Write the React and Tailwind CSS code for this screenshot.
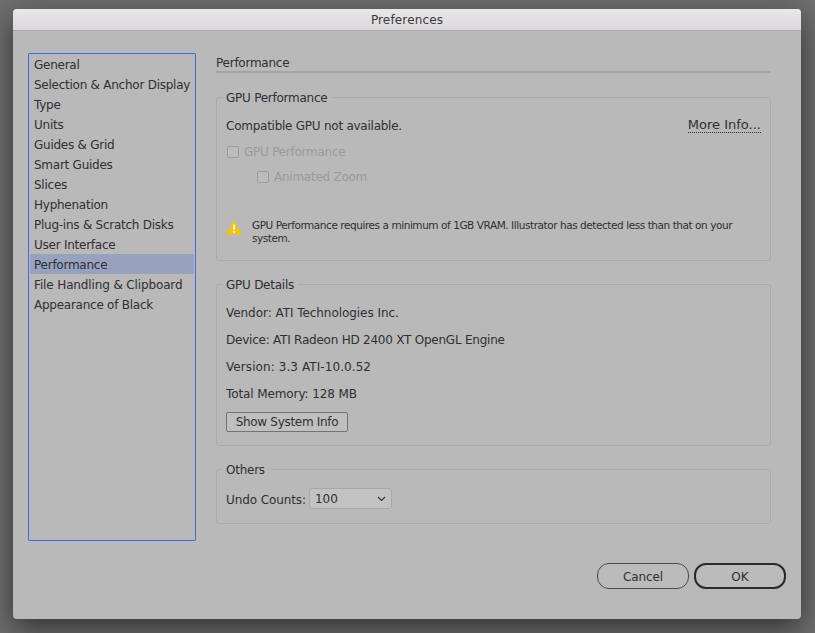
import React from "react";

const items = [
  "General",
  "Selection & Anchor Display",
  "Type",
  "Units",
  "Guides & Grid",
  "Smart Guides",
  "Slices",
  "Hyphenation",
  "Plug-ins & Scratch Disks",
  "User Interface",
  "Performance",
  "File Handling & Clipboard",
  "Appearance of Black",
];

function Group({ title, className, children }) {
  return (
    <fieldset className={"border border-[#aaaaaa] rounded-[3px] px-[9px] " + className}>
      <legend className="ml-[-4px] pl-[4px] pr-[4px] h-[16px] leading-[18px]">{title}</legend>
      {children}
    </fieldset>
  );
}

function Check({ label, className }) {
  return (
    <div className={"flex items-center h-[20px] " + className}>
      <span className="w-[12px] h-[12px] rounded-[2px] border border-[#9c9c9c] bg-[#bcbcbc] mr-[5px]" />
      <span className="text-[#9a9a9a]">{label}</span>
    </div>
  );
}

export default function App() {
  return (
    <div
      className="w-[815px] h-[633px] overflow-hidden bg-[#6e6e6e] pt-[9px] pl-[13px] text-[12px] tracking-[-0.25px] text-[#2f2f34]"
      style={{ fontFamily: '"DejaVu Sans", sans-serif' }}
    >
      <div className="w-[788px] h-[610px] bg-[#b9b9b9] rounded-[4px] shadow-[0_10px_30px_rgba(0,0,0,0.55)] flex flex-col overflow-hidden">
        <div className="h-[22px] shrink-0 bg-gradient-to-b from-[#e9e7e9] to-[#dad8da] border-b border-[#a9a9a9] flex items-center justify-center text-[#3a3a3a] tracking-[0.15px]">
          Preferences
        </div>
        <div className="flex pl-[15px] pt-[22px]">
          <div className="w-[168px] h-[488px] border border-[#3f6de0] rounded-[1px] px-[1px] shrink-0">
            {items.map((t) => (
              <div
                key={t}
                className={
                  "h-[20px] leading-[22px] pl-[4px] whitespace-nowrap " +
                  (t === "Performance" ? "bg-[#98a2bf] " : "") +
                  (t === "File Handling & Clipboard" ? "tracking-[-0.13px]" : "")
                }
              >
                {t}
              </div>
            ))}
          </div>
          <div className="w-[555px] ml-[20px]">
            <div className="h-[20px] leading-[20px] border-b-2 border-[#a4a4a4]">Performance</div>
            <Group title="GPU Performance" className="mt-[16px] h-[172px]">
              <div className="flex justify-between items-start h-[20px] mt-[11px]">
                <span className="leading-[20px]">Compatible GPU not available.</span>
                <span className="text-[13px] tracking-normal border-b border-dotted border-[#2f2f34] leading-[15px] mt-[1px]">More Info...</span>
              </div>
              <Check label="GPU Performance" className="mt-[6px] pl-[1px]" />
              <Check label="Animated Zoom" className="mt-[5px] pl-[31px]" />
              <div className="flex mt-[32px]">
                <svg width="16" height="15" viewBox="0 0 16 15" className="mt-[1px] shrink-0">
                  <path d="M8 .8 15.6 14.2H.4Z" fill="#efc41a" stroke="#efc41a" strokeLinejoin="round" />
                  <rect x="7.1" y="4.5" width="1.8" height="5.5" fill="#faf6e2" />
                  <rect x="7.1" y="11" width="1.8" height="1.8" fill="#faf6e2" />
                </svg>
                <p className="ml-[10px] text-[10.5px] tracking-[-0.44px] leading-[13px] w-[490px]">
                  GPU Performance requires a minimum of 1GB VRAM. Illustrator has detected less than that on your system.
                </p>
              </div>
            </Group>
            <Group title="GPU Details" className="mt-[15px] h-[170px]">
              <div className="mt-[8px] flex flex-col">
                <div className="h-[27px] leading-[27px] tracking-[-0.05px]">Vendor: ATI Technologies Inc.</div>
                <div className="h-[27px] leading-[27px] tracking-[-0.23px]">Device: ATI Radeon HD 2400 XT OpenGL Engine</div>
                <div className="h-[27px] leading-[27px] tracking-[0.08px]">Version: 3.3 ATI-10.0.52</div>
                <div className="h-[27px] leading-[27px] tracking-[-0.1px]">Total Memory: 128 MB</div>
              </div>
              <button className="mt-[4px] w-[122px] h-[20px] border border-[#737373] rounded-[2px] bg-[#bfbfbf] text-center leading-[18px] tracking-[-0.3px]">
                Show System Info
              </button>
            </Group>
            <Group title="Others" className="mt-[15px] h-[63px]">
              <div className="flex items-center mt-[11px]">
                <span className="pt-[2px] tracking-[-0.1px]">Undo Counts:</span>
                <div className="ml-[3px] w-[83px] h-[21px] bg-[#c2c2c2] border border-[#a8a8a8] rounded-[3px] flex items-center justify-between pl-[5px] pr-[5px] tracking-normal">
                  <span className="pt-[1px]">100</span>
                  <svg width="9" height="6" viewBox="0 0 9 6" fill="none" stroke="#333" strokeWidth="1.1">
                    <path d="M1 1l3.5 3.5L8 1" />
                  </svg>
                </div>
              </div>
            </Group>
          </div>
        </div>
        <div className="flex justify-end gap-[5px] pr-[15px] mt-[22px]">
          <button className="w-[92px] h-[26px] pt-[1px] rounded-[12px] border border-[#4a4a4a] bg-[#bbbbbb] text-center tracking-[-0.1px]">Cancel</button>
          <button className="w-[92px] h-[26px] pt-[1px] rounded-[12px] border-2 border-[#2a2a2a] bg-[#bbbbbb] text-center tracking-normal">OK</button>
        </div>
      </div>
    </div>
  );
}
